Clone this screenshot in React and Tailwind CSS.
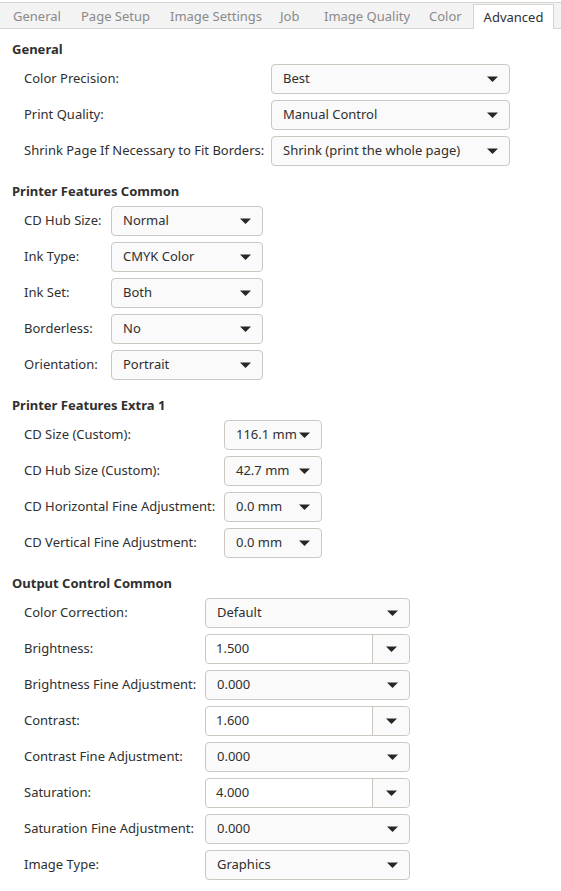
import React from "react";

const Arrow = () => (
  <svg width="11" height="6" viewBox="0 0 11 6" className="shrink-0">
    <path d="M0 0.5 L11 0.5 L5.5 6 Z" fill="#262626" />
  </svg>
);

const Combo = ({ value, w }) => (
  <div
    className={`flex h-[30px] items-center justify-between rounded-[4px] border border-[#cdc7c2] bg-[#fafafa] pl-[11px] pr-[11px] ${w}`}
  >
    <span className="whitespace-nowrap">{value}</span>
    <Arrow />
  </div>
);

const EntryCombo = ({ value }) => (
  <div className="flex h-[30px] w-[205px] items-stretch rounded-[4px] border border-[#cdc7c2] bg-white">
    <div className="flex flex-1 items-center pl-[10px]">{value}</div>
    <div className="flex w-[37px] items-center justify-center rounded-r-[4px] border-l border-[#cdc7c2] bg-[#fafafa]">
      <Arrow />
    </div>
  </div>
);

const Section = ({ title, labelW, rows, mt }) => (
  <div className={mt}>
    <div className="h-[18px] pl-[12px] font-bold leading-[18px]">{title}</div>
    <div className="mt-[6px] flex flex-col gap-[6px] pl-[24px]">
      {rows.map((r, i) => (
        <div key={i} className="flex items-center">
          <div className={`${labelW} whitespace-nowrap`}>{r[0]}</div>
          {r[2] === "entry" ? <EntryCombo value={r[1]} /> : <Combo value={r[1]} w={r[2]} />}
        </div>
      ))}
    </div>
  </div>
);

export default function App() {
  const tabs = [
    ["General", "w-[68px]"],
    ["Page Setup", "w-[89px]"],
    ["Image Settings", "w-[110px]"],
    ["Job", "w-[44px]"],
    ["Image Quality", "w-[105px]"],
    ["Color", "w-[44px]"],
  ];
  return (
    <div
      className="h-[891px] w-[561px] overflow-hidden bg-white text-[13px] text-[#2f2f2f]"
      style={{ fontFamily: '"Noto Sans", "Open Sans", sans-serif' }}
    >
      <div className="mt-[2px] flex h-[27px] items-end border-y border-[#d8d4d0] bg-[#f3f3f3]">
        <div className="flex h-full flex-1 items-center pl-[13px] pt-[2px] text-[#8a8a8a]">
          {tabs.map(([t, w]) => (
            <span key={t} className={`${w} whitespace-nowrap`}>
              {t}
            </span>
          ))}
        </div>
        <div className="mb-[-1px] mr-[7px] flex h-[25px] w-[82px] items-center justify-center border-x border-t border-[#d8d4d0] bg-white pt-[1px] text-[#2f2f2f]">
          Advanced
        </div>
      </div>

      <Section
        mt="mt-[11px]"
        title="General"
        labelW="w-[247px]"
        rows={[
          ["Color Precision:", "Best", "w-[239px]"],
          ["Print Quality:", "Manual Control", "w-[239px]"],
          ["Shrink Page If Necessary to Fit Borders:", "Shrink (print the whole page)", "w-[239px]"],
        ]}
      />
      <Section
        mt="mt-[16px]"
        title="Printer Features Common"
        labelW="w-[87px]"
        rows={[
          ["CD Hub Size:", "Normal", "w-[152px]"],
          ["Ink Type:", "CMYK Color", "w-[152px]"],
          ["Ink Set:", "Both", "w-[152px]"],
          ["Borderless:", "No", "w-[152px]"],
          ["Orientation:", "Portrait", "w-[152px]"],
        ]}
      />
      <Section
        mt="mt-[16px]"
        title="Printer Features Extra 1"
        labelW="w-[200px]"
        rows={[
          ["CD Size (Custom):", "116.1 mm", "w-[98px]"],
          ["CD Hub Size (Custom):", "42.7 mm", "w-[98px]"],
          ["CD Horizontal Fine Adjustment:", "0.0 mm", "w-[98px]"],
          ["CD Vertical Fine Adjustment:", "0.0 mm", "w-[98px]"],
        ]}
      />
      <Section
        mt="mt-[16px]"
        title="Output Control Common"
        labelW="w-[181px]"
        rows={[
          ["Color Correction:", "Default", "w-[205px]"],
          ["Brightness:", "1.500", "entry"],
          ["Brightness Fine Adjustment:", "0.000", "w-[205px]"],
          ["Contrast:", "1.600", "entry"],
          ["Contrast Fine Adjustment:", "0.000", "w-[205px]"],
          ["Saturation:", "4.000", "entry"],
          ["Saturation Fine Adjustment:", "0.000", "w-[205px]"],
          ["Image Type:", "Graphics", "w-[205px]"],
        ]}
      />
    </div>
  );
}
